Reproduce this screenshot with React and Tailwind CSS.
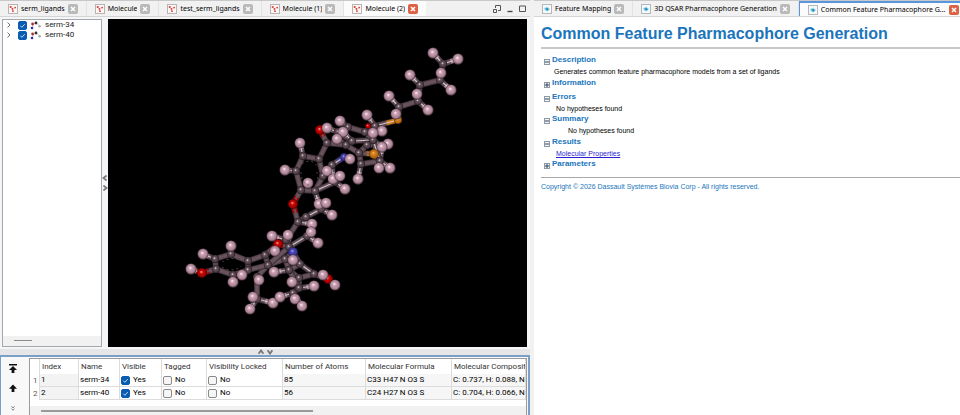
import { useState } from "react";

const UI_FONT = "font-['Roboto',sans-serif]";
const TAB_FONT = "font-['Noto_Sans','Open_Sans',sans-serif]";

// Atoms of the two superposed ligands: [element, x, y, in front, radius]
const ATOMS = {
  a1: ["H", 433, 53], a2: ["H", 458, 59], a3: ["C", 443, 64], a4: ["H", 441, 73, 1], a5: ["C", 440, 80],
  a6: ["H", 451, 90], a7: ["H", 410, 75], a8: ["C", 420, 85], a9: ["H", 417, 94, 1], a10: ["C", 418, 101],
  a11: ["H", 428, 110], a12: ["H", 389, 96], a13: ["C", 399, 107], a14: ["H", 396, 114, 1], a15: ["S", 398, 120],
  a16: ["H", 367, 115], a17: ["C", 375, 126], a18: ["O", 368, 126, 0, 3], a19: ["H", 382, 131], a20: ["H", 373, 133, 1],
  b1: ["H", 340, 121], b2: ["C", 348, 127], b3: ["C", 365, 132], b4: ["H", 327, 128], b5: ["C", 338, 132],
  b6: ["H", 343, 132], b7: ["O", 320, 130, 0, 5], b8: ["C", 327, 143], b9: ["C", 346, 145], b10: ["H", 337, 139],
  b11: ["C", 352, 141], b12: ["C", 373, 140], b13: ["H", 388, 144], b14: ["H", 382, 147, 1], b15: ["C", 367, 145],
  b16: ["C", 359, 153], b17: ["S", 374, 154, 0, 5], b18: ["H", 350, 159, 1], b19: ["N", 344, 157], b20: ["C", 332, 165],
  b21: ["C", 361, 164], b22: ["C", 380, 161], b23: ["H", 379, 168, 1], b24: ["H", 390, 168], b25: ["H", 358, 179],
  c1: ["H", 300, 143, 1], c2: ["C", 303, 156], c3: ["C", 319, 159], c4: ["C", 296, 171], c5: ["H", 285, 170],
  c6: ["C", 323, 176], c7: ["C", 301, 190], c8: ["C", 315, 191], c9: ["H", 308, 183, 1], c10: ["H", 327, 171],
  c11: ["H", 333, 179, 1], c12: ["H", 340, 176, 1], c13: ["C", 335, 182], c14: ["H", 345, 189], c15: ["H", 319, 204, 1],
  c16: ["H", 326, 203, 1], c17: ["C", 321, 209], c18: ["H", 332, 215], c19: ["O", 293, 204, 0, 5], c20: ["C", 298, 222],
  c21: ["C", 306, 217], c22: ["H", 312, 224, 1], c23: ["H", 311, 232, 1], c24: ["C", 307, 236], c25: ["H", 318, 243],
  d1: ["H", 272, 236], d2: ["H", 288, 235, 1], d3: ["C", 286, 240], d4: ["O", 278, 244, 0, 5], d5: ["C", 289, 247],
  d6: ["N", 293, 252, 0, 5], d7: ["H", 275, 251, 1], d8: ["H", 293, 260, 1], d9: ["C", 300, 264], d10: ["C", 265, 255],
  d11: ["C", 268, 265], d12: ["C", 248, 261], d13: ["C", 248, 270], d14: ["C", 231, 254], d15: ["H", 231, 246],
  d16: ["H", 203, 254], d17: ["C", 215, 259], d18: ["C", 216, 269], d19: ["O", 202, 273, 0, 5], d20: ["H", 191, 269],
  d21: ["C", 233, 275], d22: ["H", 233, 282], d23: ["H", 242, 275, 1], d24: ["C", 257, 277], d25: ["H", 259, 280, 1],
  d26: ["C", 257, 299], d27: ["H", 253, 297], d28: ["H", 250, 309, 1], d29: ["H", 273, 303], d30: ["H", 274, 272],
  d31: ["C", 289, 270], d32: ["C", 299, 278], d33: ["C", 314, 274], d34: ["O", 328, 279, 0, 5], d35: ["H", 323, 275, 1],
  d36: ["H", 335, 285, 1], d37: ["H", 314, 286], d38: ["C", 299, 288], d39: ["H", 292, 282], d40: ["C", 293, 293],
  d41: ["H", 280, 297], d42: ["H", 295, 299, 1], d43: ["H", 302, 306, 1], d44: ["C", 285, 259],
};

const BONDS = `a1-a3 a2-a3 a3-a4 a3-a5 a5-a6 a5-a8 a7-a8 a8-a9 a8-a10 a10-a11 a10-a13 a12-a13 a13-a15 a17-a15
a16-a17 a17-a19 a17-a20 a17-b3 b1-b2 b2-b3 b4-b5 b2-b5 b5-b11 b6-b11 b10-b9 b11-b12 b12-b3 b13-b15 b12-b14
b9-b11 b9-b16 b16-b17 b16-b15 b8-b9 b7-b8 b8-c3 b21-b16 b21-b22 b22-b17 b22-b14 b22-b24 b22-b12 b21-b25 b18-b19
b19-b20 b20-c10 b20-c11 c1-c2 c2-c3 c2-c4 c4-c5 c3-c6 c4-c7 c7-c8 c6-c8 c7-c19 c8-c13 c13-c12 c13-c14 b20-c6
c8-c15 c19-c20 c20-c21 c21-c17 c17-c16 c17-c18 c20-c22 c20-d3 c24-c23 c24-c25 c24-d5 d1-d3 d2-d5 d3-d6 d5-d4
d6-d9 d6-d44 d10-d4 d10-d11 d10-d12 d12-d13 d12-d14 d14-d15 d14-d17 d17-d16 d17-d18 d18-d19 d19-d20 d18-d21 d21-d22
d21-d13 d13-d23 d11-d24 d24-d25 d24-d26 d26-d27 d26-d28 d26-d29 d11-d44 d44-d31 d31-d30 d31-d9 d9-d33
d33-d34 d34-d36 d31-d32 d32-d38 d32-d33 d38-d37 d38-d40 d40-d41 d40-d42 d40-d43 d31-d38 d44-d9 d11-d5 d13-d11`
  .split(/\s+/)
  .map((pair) => pair.split("-"));

// Bonds that catch the light along their whole length
const LIT = new Set(["b11-b12", "b19-b20", "c8-c13", "c21-c17", "c24-d5", "d9-d33", "a17-a15", "b22-b12"]);

const TONE = { H: "#a98796", C: "#5e4b54", O: "#b30000", N: "#4340a8", S: "#c9771b" };
const RADIUS = { H: 5.5, C: 4.2, O: 4, N: 4, S: 4 };

function Bond({ from, to }) {
  const [e1, x1, y1] = ATOMS[from];
  const [e2, x2, y2] = ATOMS[to];
  const mx = (x1 + x2) / 2;
  const my = (y1 + y2) / 2;
  const lit = LIT.has(`${from}-${to}`);
  const hydrogen = e1 === "H" || e2 === "H";
  return (
    <g>
      <path d={`M${x1} ${y1}L${x2} ${y2}`} stroke="#2f252a" strokeWidth="6" />
      <path d={`M${x1} ${y1}L${mx} ${my}`} stroke={TONE[e1]} strokeWidth="4.6" />
      <path d={`M${mx} ${my}L${x2} ${y2}`} stroke={TONE[e2]} strokeWidth="4.6" />
      <path
        d={`M${x1} ${y1}L${x2} ${y2}`}
        stroke={lit || hydrogen ? "#eee2e8" : "#6d5862"}
        strokeWidth={lit || hydrogen ? "1.2" : "2"}
        opacity="0.8"
      />
    </g>
  );
}

function Atom({ id }) {
  const [element, x, y, , r] = ATOMS[id];
  return <circle cx={x} cy={y} r={r || RADIUS[element]} fill={`url(#shade${element})`} />;
}

const SHADES = [
  ["H", "#fff4f8", "#cba2b4", "#a88293", "#3f2d35"],
  ["C", "#e8dfe3", "#66525b", "#4a3a42", "#1d1519"],
  ["O", "#ffb0a0", "#d00808", "#a00000", "#400000"],
  ["N", "#a8a8f0", "#4d49bb", "#38348f", "#17153f"],
  ["S", "#f5bd70", "#d5811f", "#b56812", "#5a3000"],
];

function MoleculeView() {
  const ids = Object.keys(ATOMS);
  const back = ids.filter((id) => ATOMS[id][0] === "H" && !ATOMS[id][3]);
  const heavy = ids.filter((id) => ATOMS[id][0] !== "H");
  const hydrogens = ids.filter((id) => ATOMS[id][0] === "H");
  return (
    <svg viewBox="108 19 419 328" className="h-full w-full" fill="none" role="img" aria-label="Superposed ligands">
      <defs>
        {SHADES.map(([el, a, b, c, d]) => (
          <radialGradient key={el} id={`shade${el}`} cx="0.5" cy="0.5" r="0.5" fx="0.42" fy="0.38">
            <stop offset="0" stopColor={a} />
            <stop offset="0.32" stopColor={b} />
            <stop offset="0.76" stopColor={c} />
            <stop offset="1" stopColor={d} />
          </radialGradient>
        ))}
      </defs>
      {back.map((id) => <Atom key={id} id={id} />)}
      {BONDS.map(([from, to]) => <Bond key={from + to} from={from} to={to} />)}
      {heavy.map((id) => <Atom key={id} id={id} />)}
      {hydrogens.map((id) => <Atom key={id} id={id} />)}
      <path
        d="M302 164C308 159 314 161 317 166M301 172C301 181 305 186 311 185M317 172L318 180M222 267C228 271 236 271 241 266M222 262C228 258 236 257 241 261"
        stroke="#5f5058"
        strokeWidth="0.8"
        strokeDasharray="2 3"
      />
    </svg>
  );
}

function MoleculeIcon() {
  return (
    <svg viewBox="0 0 10 10" className="size-[10px] shrink-0" aria-hidden="true">
      <rect x="0.5" y="0.5" width="9" height="9" fill="#fdf6f5" stroke="#b9b3b3" />
      <path d="M2.6 3L4.6 5L7 3.4M4.6 5L4.8 7.4" stroke="#f0b5b0" strokeWidth="0.7" fill="none" />
      <circle cx="2.7" cy="3" r="1.1" fill="#d4473e" />
      <circle cx="4.4" cy="5" r="0.9" fill="#d4473e" />
      <circle cx="7.2" cy="3.6" r="0.9" fill="#d4473e" />
      <circle cx="5" cy="7.2" r="0.9" fill="#d4473e" />
    </svg>
  );
}

function ReportIcon() {
  return (
    <svg viewBox="0 0 10 10" className="size-[10px] shrink-0" aria-hidden="true">
      <rect x="0.5" y="0.5" width="9" height="9" fill="#f7fafb" stroke="#b3b8bb" />
      <path d="M2 4.2L5.2 2.4L8 5L5.6 7.6L3 6.6Z" fill="#9ed6ea" />
      <path d="M3.2 4.6L5.8 4L6.8 5.6L5 6.8Z" fill="#1f8fc0" />
    </svg>
  );
}

function CloseButton({ name, active }) {
  return (
    <button
      type="button"
      aria-label={`Close ${name}`}
      className={`grid size-[10px] shrink-0 place-items-center rounded-[2px] ${active ? "bg-[#dd6243]" : "bg-[#b9b9b9]"}`}
    >
      <svg viewBox="0 0 6 6" className="size-[6px]" stroke="#ffffff" strokeWidth="1.5" aria-hidden="true">
        <path d="M1 1L5 5M5 1L1 5" />
      </svg>
    </button>
  );
}

function Tab({ name, label, icon, active, accent }) {
  return (
    <div
      className={`flex min-w-0 items-center gap-[3px] ${active ? "bg-[#fbfbfb]" : "border-r border-[#e2e2e2]"} ${
        accent ? "flex-1 border-t-2 border-l border-[#5a96e0] pr-px pl-2" : "shrink-0 px-2"
      }`}
    >
      {icon}
      <button type="button" className={`min-w-0 truncate text-left leading-3 text-black ${accent ? "flex-1" : ""}`}>
        {label || name}
      </button>
      <CloseButton name={name} active={active} />
    </div>
  );
}

function Check({ label, on }) {
  const [checked, setChecked] = useState(on);
  return (
    <span className="inline-grid shrink-0 place-items-center">
      <input
        type="checkbox"
        aria-label={label}
        checked={checked}
        onChange={() => setChecked(!checked)}
        className="col-start-1 row-start-1 size-[9px] appearance-none rounded-[2px] border border-[#8a8a8a] bg-[#f6f6f6] checked:border-[#0a5cb0] checked:bg-[#0a5cb0]"
      />
      {checked && (
        <svg viewBox="0 0 8 8" className="pointer-events-none col-start-1 row-start-1 size-[7px]" fill="none" stroke="#d6e8fa" aria-hidden="true">
          <path d="M1.5 4.2L3.3 6L6.6 2.4" />
        </svg>
      )}
    </span>
  );
}

function TreeRow({ name }) {
  return (
    <li className="flex h-[10px] items-center">
      <button type="button" aria-label={`Expand ${name}`} className="w-[15px] pl-1">
        <svg viewBox="0 0 4 6" className="h-[6px] w-[4px]" fill="none" stroke="#707070" aria-hidden="true">
          <path d="M0.5 0.5L3 3L0.5 5.5" />
        </svg>
      </button>
      <Check label={`Show ${name}`} on />
      <svg viewBox="0 0 12 10" className="ml-[3px] h-[10px] w-[12px]" aria-hidden="true">
        <path d="M3 4L6 3L9 5L10.5 6.5M3 4L2.5 8" stroke="#b5b5b5" strokeWidth="0.7" fill="none" />
        <circle cx="2.6" cy="4" r="1.4" fill="#b02a3a" />
        <circle cx="2" cy="8" r="1.3" fill="#2430b0" />
        <circle cx="6" cy="3" r="1.4" fill="#303030" />
        <circle cx="9.6" cy="6.2" r="1.2" fill="#a8a8a8" />
      </svg>
      <span className="ml-[3px] text-[8px] leading-[10px] text-[#222]">{name}</span>
    </li>
  );
}

const COLUMNS = ["Index", "Name", "Visible", "Tagged", "Visibility Locked", "Number of Atoms", "Molecular Formula", "Molecular Composition"];
const ROWS = [
  { index: 1, name: "serm-34", atoms: 85, formula: "C33 H47 N O3 S", composition: "C: 0.737, H: 0.088, N: 0.026, O: 0.089, S: 0.060" },
  { index: 2, name: "serm-40", atoms: 56, formula: "C24 H27 N O3 S", composition: "C: 0.704, H: 0.066, N: 0.034, O: 0.117, S: 0.078" },
];

function PropertyTable() {
  const cell = "border-r border-b border-[#dcdcdc] px-px overflow-hidden";
  const flag = (label, on) => (
    <span className="flex items-center gap-[3px]">
      <Check label={label} on={on} />
      {on ? "Yes" : "No"}
    </span>
  );
  return (
    <table className="w-full table-fixed border-separate border-spacing-0 whitespace-nowrap text-left text-[8px] leading-3 text-black">
      <colgroup>
        <col className="w-[10px]" />
        <col className="w-[39px]" />
        <col className="w-[41px]" />
        <col className="w-[42px]" />
        <col className="w-[45px]" />
        <col className="w-[76px]" />
        <col className="w-[83px]" />
        <col className="w-[86px]" />
        <col />
      </colgroup>
      <thead>
        <tr className="h-[15px]">
          <td className="border-r border-[#dcdcdc]" />
          {COLUMNS.map((c) => (
            <th key={c} scope="col" className="overflow-hidden border-r border-[#dcdcdc] pl-[2px] font-normal text-[#333]">
              {c}
            </th>
          ))}
        </tr>
      </thead>
      <tbody>
        {ROWS.map((r) => (
          <tr key={r.index} className="h-[13px]">
            <th scope="row" className="border-r border-[#dcdcdc] pl-[3px] font-normal text-[#555]">{r.index}</th>
            <td className={`${cell} bg-[#f3f3f3]`}>{r.index}</td>
            <td className={cell}>{r.name}</td>
            <td className={cell}>{flag(`${r.name} visible`, true)}</td>
            <td className={cell}>{flag(`${r.name} tagged`, false)}</td>
            <td className={cell}>{flag(`${r.name} visibility locked`, false)}</td>
            <td className={`${cell} bg-[#f6f6f6]`}>{r.atoms}</td>
            <td className={`${cell} bg-[#f6f6f6]`}>{r.formula}</td>
            <td className={`${cell} bg-[#f6f6f6]`}>{r.composition}</td>
          </tr>
        ))}
      </tbody>
    </table>
  );
}

function Section({ title, open, className = "", children }) {
  return (
    <section className={className}>
      <h2 className="flex h-[11px] items-end gap-[2px] pl-[3px] text-[8px] font-bold leading-[11px] text-[#1a75bc]">
        <button type="button" aria-label={`${open ? "Collapse" : "Expand"} ${title}`} className="h-[7px] w-[6px]">
          <svg viewBox="0 0 6 6" className="mt-px size-[6px]" fill="none" aria-hidden="true">
            <rect x="0.5" y="0.5" width="5" height="5" fill="#f2f4f6" stroke="#8d99a5" />
            <path d={open ? "M1 3H5" : "M1 3H5M3 1V5"} stroke="#33475c" />
          </svg>
        </button>
        {title}
      </h2>
      {children}
    </section>
  );
}

function Report() {
  const body = "h-[11px] text-[7px] leading-[13px] whitespace-nowrap";
  return (
    <article className="min-h-0 flex-1 overflow-hidden bg-white pl-[7px] pt-[6px] font-['Liberation_Sans',sans-serif] text-black">
      <h1 className="truncate text-[16px] font-bold leading-[22px] text-[#1a75bc]">Common Feature Pharmacophore Generation</h1>
      <hr className="mt-[2px] mb-[5px] border-t-2 border-[#c9c9c9]" />
      <Section title="Description" open className="pb-px">
        <p className={`${body} pl-[13px]`}>Generates common feature pharmacophore models from a set of ligands</p>
      </Section>
      <Section title="Information" className="pb-[3px]" />
      <Section title="Errors" open>
        <p className={`${body} pl-[15px]`}>No hypotheses found</p>
      </Section>
      <Section title="Summary" open className="pb-px">
        <p className={`${body} pl-[27px]`}>No hypotheses found</p>
      </Section>
      <Section title="Results" open>
        <p className={`${body} pl-[15px]`}>
          <a href="#molecular-properties" className="text-[#2a1fd0] underline">Molecular Properties</a>
        </p>
      </Section>
      <Section title="Parameters" />
      <hr className="mt-2 mb-1 border-t border-[#a8a8a8]" />
      <p className="text-[7px] leading-[10px] text-[#1a75bc]">Copyright © 2026 Dassault Systèmes Biovia Corp - All rights reserved.</p>
    </article>
  );
}

function WindowButtons() {
  return (
    <div className="ml-auto flex items-center gap-[6px] pr-1">
      <button type="button" aria-label="Float window">
        <svg viewBox="0 0 8 8" className="size-[8px]" fill="none" stroke="#555" aria-hidden="true">
          <path d="M2.5 3V0.5H7.5V5.5H5M0.5 4.5H3.5V7.5H0.5Z" />
        </svg>
      </button>
      <button type="button" aria-label="Minimize">
        <svg viewBox="0 0 6 8" className="h-[8px] w-[6px]" stroke="#444" aria-hidden="true">
          <path d="M0.5 6.5H5.5" strokeWidth="1.4" />
        </svg>
      </button>
      <button type="button" aria-label="Maximize">
        <svg viewBox="0 0 7 8" className="h-[8px] w-[7px]" fill="none" stroke="#555" aria-hidden="true">
          <path d="M0.5 1H6.5V6.5H0.5Z" />
        </svg>
      </button>
    </div>
  );
}

function Splitter({ vertical }) {
  return (
    <div className={`flex shrink-0 items-center justify-center ${vertical ? "w-[6px] flex-col gap-1" : "h-[6px] gap-[3px] bg-[#e6e6e8]"}`}>
      <svg viewBox="0 0 6 6" className={vertical ? "size-[6px]" : "size-[6px] rotate-90"} fill="none" stroke="#777" strokeWidth="1.8" aria-hidden="true">
        <path d="M4.6 0.6L1.4 3L4.6 5.4" />
      </svg>
      <svg viewBox="0 0 6 6" className={vertical ? "size-[6px]" : "size-[6px] rotate-90"} fill="none" stroke="#777" strokeWidth="1.8" aria-hidden="true">
        <path d="M1.4 0.6L4.6 3L1.4 5.4" />
      </svg>
    </div>
  );
}

export default function App() {
  const tabBar = `${TAB_FONT} flex h-[17px] shrink-0 border-t border-b border-t-[#c8c8c8] border-b-[#d5d5d5] bg-[#f1f1f1] text-[7px]`;
  return (
    <main className={`${UI_FONT} grid h-screen grid-cols-[530fr_426fr] gap-1 overflow-hidden bg-[#f1f1f1]`}>
      <div className="flex min-h-0 min-w-0 flex-col">
        <nav className={tabBar} aria-label="Molecule windows">
          <Tab name="serm_ligands" icon={<MoleculeIcon />} />
          <Tab name="Molecule" icon={<MoleculeIcon />} />
          <Tab name="test_serm_ligands" icon={<MoleculeIcon />} />
          <Tab name="Molecule (1)" icon={<MoleculeIcon />} />
          <Tab name="Molecule (2)" icon={<MoleculeIcon />} active />
          <WindowButtons />
        </nav>
        <div className="flex min-h-0 flex-1 bg-[#f4f5f7] pt-[2px] pr-[3px] pb-[2px] pl-[2px]">
          <aside className="flex w-[100px] shrink-0 flex-col border border-[#a4a8ae] bg-white">
            <ul className="flex-1">
              <TreeRow name="serm-34" />
              <TreeRow name="serm-40" />
            </ul>
            <div className="h-[10px] bg-[#f1f1f1] pt-[4px] pl-[11px]">
              <div className="h-px w-[18px] bg-[#8a8a8a]" />
            </div>
          </aside>
          <Splitter vertical />
          <div className="min-w-0 flex-1 bg-black">
            <MoleculeView />
          </div>
        </div>
        <Splitter />
        <div className="flex h-[60px] shrink-0 border-t-2 border-r-2 border-l border-[#7ba0c8] bg-[#f8f8f8]">
          <div className="flex w-[28px] shrink-0 flex-col items-center gap-[11px] overflow-hidden pt-[7px] pr-1">
            <button type="button" aria-label="Move to top">
              <svg viewBox="0 0 8 9" className="h-[9px] w-[8px]" fill="#111" aria-hidden="true">
                <path d="M0 0H8V1.6H0ZM4 2L8 6H5.4V9H2.6V6H0Z" />
              </svg>
            </button>
            <button type="button" aria-label="Move up">
              <svg viewBox="0 0 8 9" className="h-[9px] w-[8px]" fill="#111" aria-hidden="true">
                <path d="M4 0.5L8 4.7H5.4V8H2.6V4.7H0Z" />
              </svg>
            </button>
            <button type="button" aria-label="More tools">
              <svg viewBox="0 0 4 5" className="mt-[2px] h-[5px] w-[4px]" fill="none" stroke="#555" strokeWidth="0.8" aria-hidden="true">
                <path d="M0.5 0.5L2 1.8L3.5 0.5M0.5 2.8L2 4.2L3.5 2.8" />
              </svg>
            </button>
          </div>
          <div className="mt-px mr-px flex min-w-0 flex-1 flex-col overflow-hidden border-t border-r border-l border-[#9a9a9a] bg-white">
            <PropertyTable />
            <div className="mt-auto h-[9px] bg-[#f1f1f1] pt-1 pl-[11px]">
              <div className="h-[2px] w-[56%] bg-[#9a9a9a]" />
            </div>
          </div>
        </div>
      </div>
      <div className="flex min-h-0 min-w-0 flex-col">
        <nav className={tabBar} aria-label="Report windows">
          <Tab name="Feature Mapping" icon={<ReportIcon />} />
          <Tab name="3D QSAR Pharmacophore Generation" icon={<ReportIcon />} />
          <Tab
            name="Common Feature Pharmacophore Generation"
            label="Common Feature Pharmacophore G..."
            icon={<ReportIcon />}
            active
            accent
          />
        </nav>
        <Report />
      </div>
    </main>
  );
}
